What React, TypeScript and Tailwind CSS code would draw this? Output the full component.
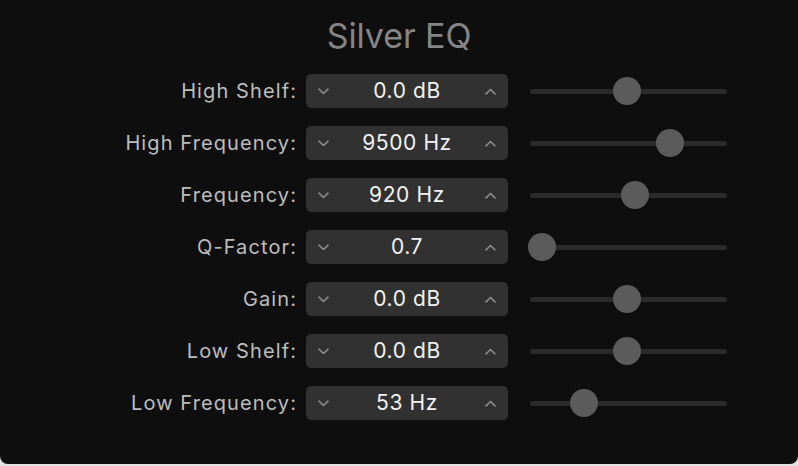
import React from "react";

const rows = [
  { label: "High Shelf:", value: "0.0 dB", x: 627 },
  { label: "High Frequency:", value: "9500 Hz", x: 670 },
  { label: "Frequency:", value: "920 Hz", x: 635 },
  { label: "Q-Factor:", value: "0.7", x: 542 },
  { label: "Gain:", value: "0.0 dB", x: 627 },
  { label: "Low Shelf:", value: "0.0 dB", x: 627 },
  { label: "Low Frequency:", value: "53 Hz", x: 584 },
];

function Down() {
  return (
    <svg width="11" height="7" viewBox="0 0 11 7" fill="none">
      <path d="M1 1.2 L5.5 5.5 L10 1.2" stroke="#8c8c8c" strokeWidth="1.6" strokeLinecap="round" strokeLinejoin="round" />
    </svg>
  );
}
function Up() {
  return (
    <svg width="11" height="7" viewBox="0 0 11 7" fill="none">
      <path d="M1 5.8 L5.5 1.5 L10 5.8" stroke="#8c8c8c" strokeWidth="1.6" strokeLinecap="round" strokeLinejoin="round" />
    </svg>
  );
}

export default function App() {
  return (
    <div className="w-[798px] h-[466px] bg-[#e2e2e2]" style={{ fontFamily: "Inter, 'Liberation Sans', sans-serif" }}>
      <div className="w-[798px] h-[464px] bg-[#0e0e0e] rounded-b-[8px] flex flex-col">
        <div className="h-[65px] flex justify-center pt-[14px]">
          <span className="text-[34px] leading-[44px] text-[#858585] tracking-[-0.1px]">Silver EQ</span>
        </div>
        <div className="flex flex-col">
          {rows.map((r) => (
            <div key={r.label} className="h-[52px] flex items-center">
              <div className="w-[297px] text-right text-[20px] tracking-[1.1px] text-[#bdbdbd]">{r.label}</div>
              <div className="ml-[9px] w-[202px] h-[34px] rounded-[5px] bg-[#313131] flex items-center px-[12px]">
                <Down />
                <div className="flex-1 text-center text-[21px] tracking-[0.6px] text-[#f2f2f2]">{r.value}</div>
                <Up />
              </div>
              <div className="ml-[22px] w-[197px] h-[5px] rounded-full bg-[#2a2a2a] relative">
                <div
                  className="absolute top-1/2 w-[28px] h-[28px] -mt-[14px] -ml-[14px] rounded-full bg-[#5b5b5b]"
                  style={{ left: r.x - 530 }}
                />
              </div>
            </div>
          ))}
        </div>
      </div>
    </div>
  );
}
